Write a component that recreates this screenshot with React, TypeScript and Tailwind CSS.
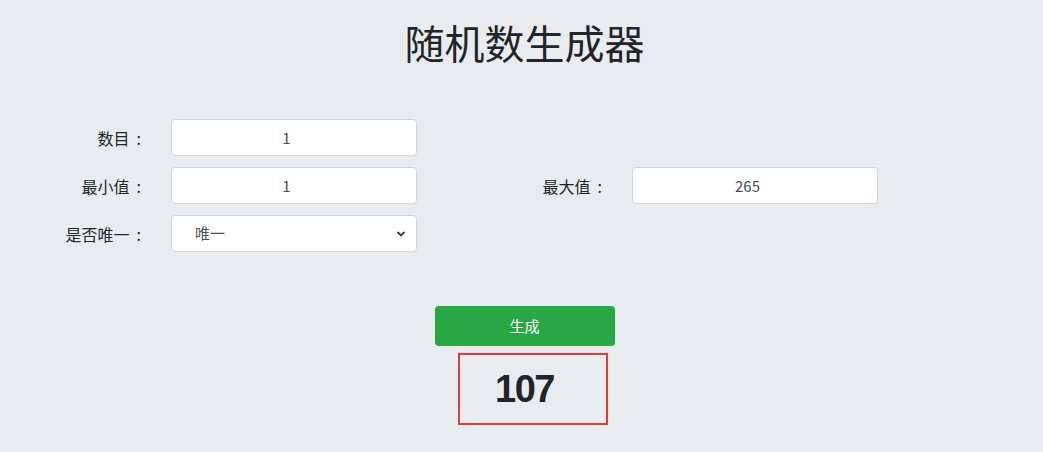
import React from "react";

const font = { fontFamily: '"Noto Sans CJK SC", "Noto Sans", sans-serif' };

function Label({ text }: { text: string }) {
  return (
    <div className="w-[155px] shrink-0 pr-[30px] text-right text-[16px] text-[#212529]">
      {text}
      <span className="ml-[7px]">:</span>
    </div>
  );
}

function TextInput({ value }: { value: string }) {
  return (
    <input
      readOnly
      value={value}
      className="h-[37px] w-[246px] rounded-[4px] border border-[#ced4da] bg-white pr-[15px] text-center text-[15px] text-[#495057] outline-none"
      style={font}
    />
  );
}

export default function App() {
  return (
    <div
      className="min-h-[452px] w-full bg-[#e9ecef] pt-[14px]"
      style={{ fontFamily: '"Noto Sans CJK SC", "Noto Sans", sans-serif' }}
    >
      <h1 className="pl-[6px] text-center text-[40px] font-normal leading-[56px] text-[#212529]">
        随机数生成器
      </h1>

      <div className="mt-[49px] flex flex-col gap-[11px] pl-[16px]">
        <div className="flex items-center">
          <div className="flex w-[461px] items-center">
            <Label text="数目" />
            <TextInput value="1" />
          </div>
        </div>
        <div className="flex items-center">
          <div className="flex w-[461px] items-center">
            <Label text="最小值" />
            <TextInput value="1" />
          </div>
          <div className="flex w-[461px] items-center">
            <Label text="最大值" />
            <TextInput value="265" />
          </div>
        </div>
        <div className="flex items-center">
          <div className="flex w-[461px] items-center">
            <Label text="是否唯一" />
            <div className="relative flex h-[37px] w-[246px] items-center rounded-[4px] border border-[#ced4da] bg-white pl-[23px] text-[15px] text-[#495057]">
              唯一
              <svg
                className="absolute right-[10px] top-[14px]"
                width="10"
                height="8"
                viewBox="0 0 10 8"
              >
                <path d="M1.5 2 L5 5.5 L8.5 2" stroke="#343a40" strokeWidth="1.8" fill="none" />
              </svg>
            </div>
          </div>
        </div>
      </div>

      <div className="mt-[54px] flex flex-col items-center pl-[6px]">
        <button className="h-[40px] w-[180px] rounded-[4px] bg-[#28a745] text-[15px] text-white">
          生成
        </button>
        <div className="relative mt-[7px] flex h-[72px] w-[150px] items-center justify-center">
          <div className="absolute left-[8px] top-0 h-[72px] w-[150px] border-2 border-[#e53935]" />
          <span
            className="text-[38px] font-bold leading-none tracking-[-1.5px] text-[#212529]"
            style={{ fontFamily: '"Liberation Sans", Arial, sans-serif' }}
          >
            107
          </span>
        </div>
      </div>
    </div>
  );
}
